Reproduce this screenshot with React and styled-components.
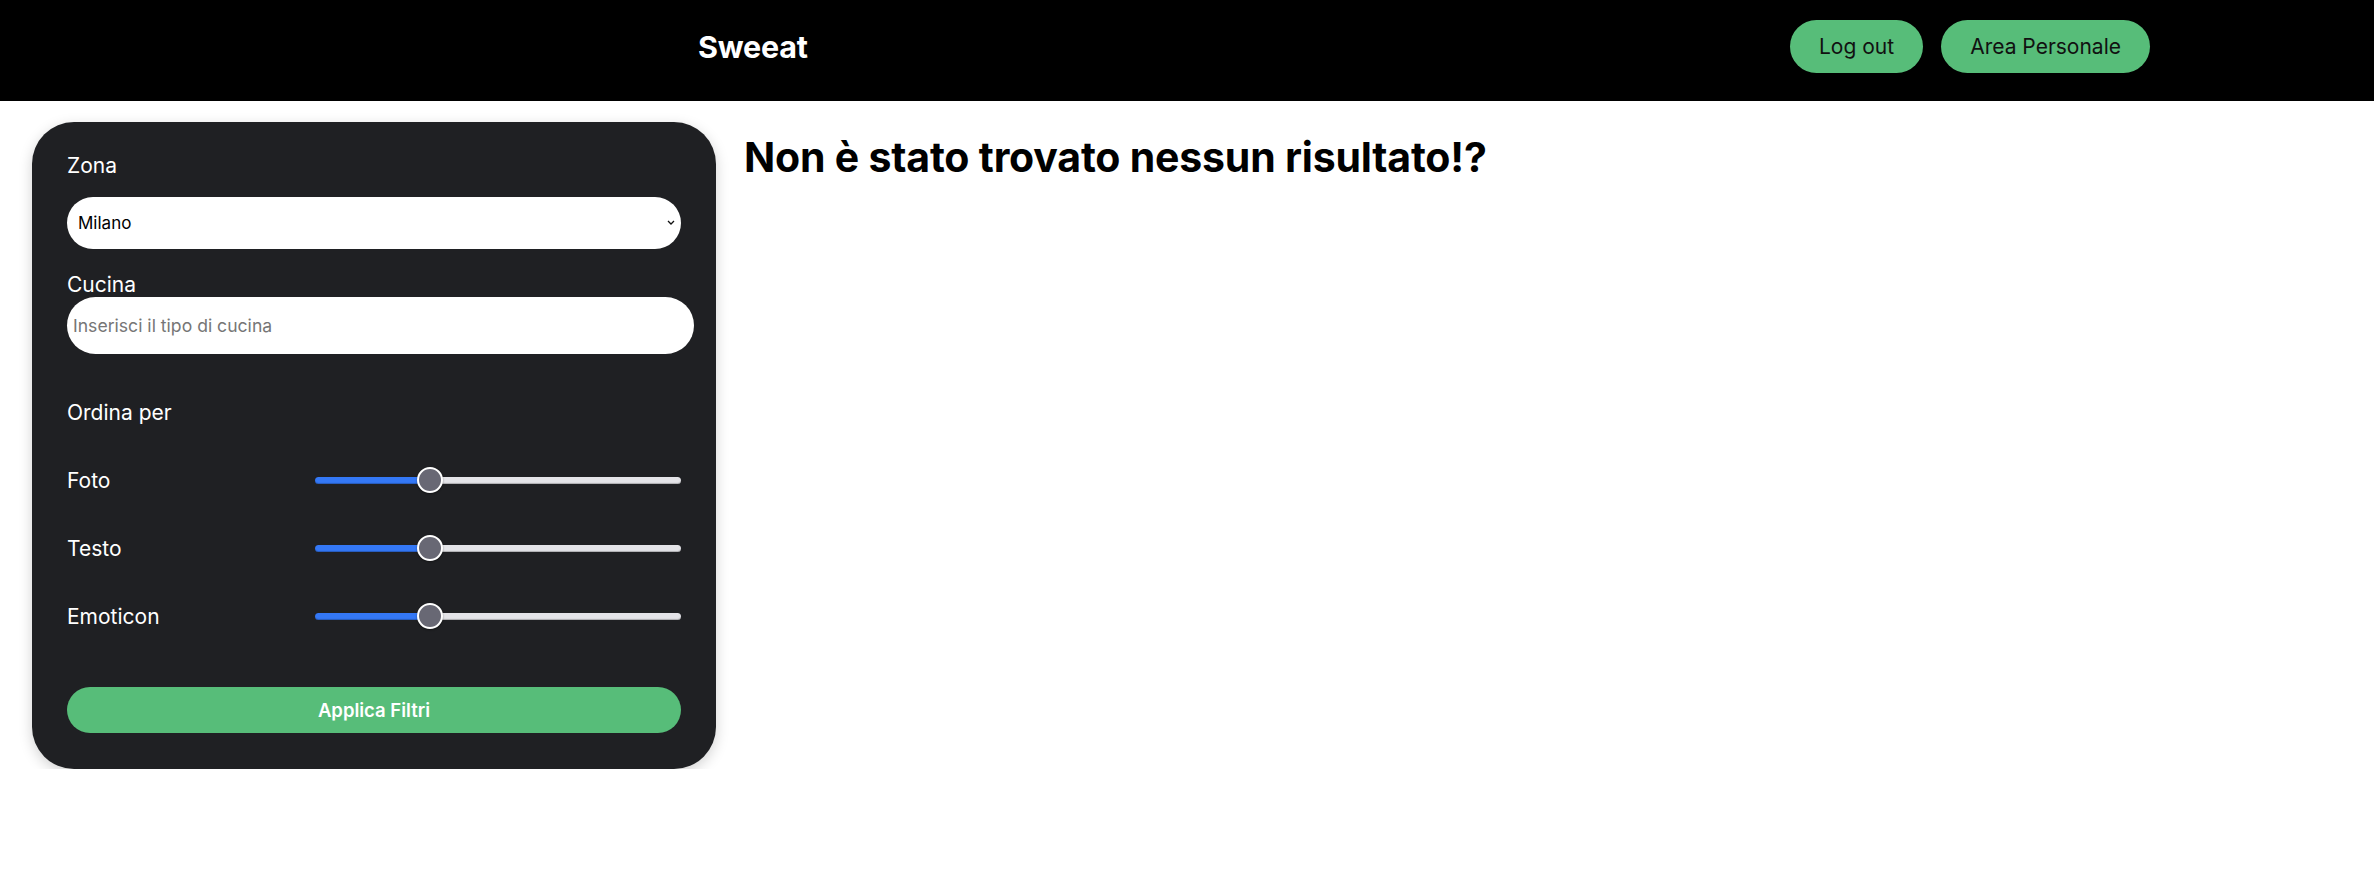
import React from 'react';
import styled, { createGlobalStyle } from 'styled-components';

const GlobalStyle = createGlobalStyle`
  body {
    margin: 0;
    background: #ffffff;
    font-family: 'Inter', 'Noto Sans', sans-serif;
  }
`;

const Header = styled.header`
  height: 101px;
  background-color: #000000;
  display: flex;
  align-items: center;
  padding: 0 224px 0 698px;
  box-sizing: border-box;
`;

const Brand = styled.h1`
  margin: 0 0 8px 0;
  color: #ffffff;
  font-size: 30.5px;
  font-weight: 700;
  letter-spacing: -0.2px;
`;

const Actions = styled.div`
  margin: 0 0 9px auto;
  display: flex;
  gap: 18px;
`;

const PillButton = styled.button`
  height: 53px;
  padding: 0 29px;
  border: none;
  border-radius: 27px;
  background-color: #57bd79;
  color: #111111;
  font-family: inherit;
  font-size: 21px;
  cursor: pointer;
`;

const Main = styled.main`
  display: flex;
  align-items: flex-start;
  gap: 28px;
  padding: 21px 0 0 32px;
`;

const FilterCard = styled.form`
  width: 684px;
  box-sizing: border-box;
  padding: 32px 35px 36px 35px;
  background-color: #1f2023;
  border-radius: 42px;
  box-shadow: 0 4px 14px rgba(0, 0, 0, 0.18);
  color: #ffffff;
  display: flex;
  flex-direction: column;
`;

const Label = styled.label`
  display: block;
  font-size: 21px;
  line-height: 24px;
  margin-bottom: ${props => props.gap || 0}px;
`;

const SelectWrap = styled.div`
  position: relative;
  margin-bottom: 24px;
  svg {
    position: absolute;
    right: 6px;
    top: 23px;
    pointer-events: none;
  }
`;

const Select = styled.select`
  appearance: none;
  width: 100%;
  height: 52px;
  border: none;
  border-radius: 26px;
  padding: 0 11px;
  background: #ffffff;
  color: #000000;
  font-family: inherit;
  font-size: 17px;
  outline: none;
`;

const TextInput = styled.input`
  width: calc(100% + 13px);
  box-sizing: border-box;
  height: 57px;
  border: none;
  border-radius: 29px;
  padding: 0 6px;
  background: #ffffff;
  font-family: inherit;
  font-size: 17.6px;
  outline: none;
  margin-bottom: 36px;
  &::placeholder {
    color: #767676;
  }
`;

const SortGrid = styled.div`
  display: grid;
  grid-template-columns: 248px 1fr;
  grid-auto-rows: 44px;
  row-gap: 24px;
  align-items: center;
  margin-bottom: 49px;
`;

const SortTitle = styled.span`
  grid-column: 1 / -1;
  font-size: 21px;
`;

const SortLabel = styled.span`
  font-size: 21px;
`;

const fill = p => `calc(13px + (100% - 26px) * ${p.$value / 100})`;

const Range = styled.input.attrs({ type: 'range' })`
  appearance: none;
  -webkit-appearance: none;
  width: 100%;
  height: 7px;
  margin: 0;
  border-radius: 4px;
  background: linear-gradient(to right, #3478f6 0, #3478f6 ${fill}, #e4e4e8 ${fill}, #e4e4e8 100%);
  box-shadow: inset 0 -1px 1px rgba(0, 0, 0, 0.25);
  outline: none;
  &::-webkit-slider-thumb {
    -webkit-appearance: none;
    width: 26px;
    height: 26px;
    border-radius: 50%;
    background: #686874;
    border: 2px solid #ffffff;
    box-sizing: border-box;
    box-shadow: 0 1px 2px rgba(0, 0, 0, 0.4);
  }
`;

const SubmitButton = styled.button`
  width: 100%;
  height: 46px;
  border: none;
  border-radius: 23px;
  background-color: #57bd79;
  color: #ffffff;
  font-family: inherit;
  font-size: 18.5px;
  font-weight: 600;
  cursor: pointer;
`;

const EmptyTitle = styled.h2`
  margin: 10px 0 0 0;
  font-size: 41px;
  font-weight: 700;
  letter-spacing: -0.2px;
  color: #000000;
`;

const sorters = ['Foto', 'Testo', 'Emoticon'];

export default function App() {
  return (
    <>
      <GlobalStyle />
      <Header>
        <Brand>Sweeat</Brand>
        <Actions>
          <PillButton>Log out</PillButton>
          <PillButton>Area Personale</PillButton>
        </Actions>
      </Header>
      <Main>
        <FilterCard onSubmit={e => e.preventDefault()}>
          <Label gap={19}>Zona</Label>
          <SelectWrap>
            <Select defaultValue="Milano">
              <option>Milano</option>
              <option>Roma</option>
              <option>Torino</option>
            </Select>
            <svg width="8" height="5" viewBox="0 0 8 5" fill="none">
              <path d="M1 1l3 3 3-3" stroke="#111" strokeWidth="1.3" />
            </svg>
          </SelectWrap>
          <Label>Cucina</Label>
          <TextInput placeholder="Inserisci il tipo di cucina" />
          <SortGrid>
            <SortTitle>Ordina per</SortTitle>
            {sorters.map(name => (
              <React.Fragment key={name}>
                <SortLabel>{name}</SortLabel>
                <Range $value={30} defaultValue={30} min={0} max={100} />
              </React.Fragment>
            ))}
          </SortGrid>
          <SubmitButton type="submit">Applica Filtri</SubmitButton>
        </FilterCard>
        <EmptyTitle>Non è stato trovato nessun risultato!?</EmptyTitle>
      </Main>
    </>
  );
}
